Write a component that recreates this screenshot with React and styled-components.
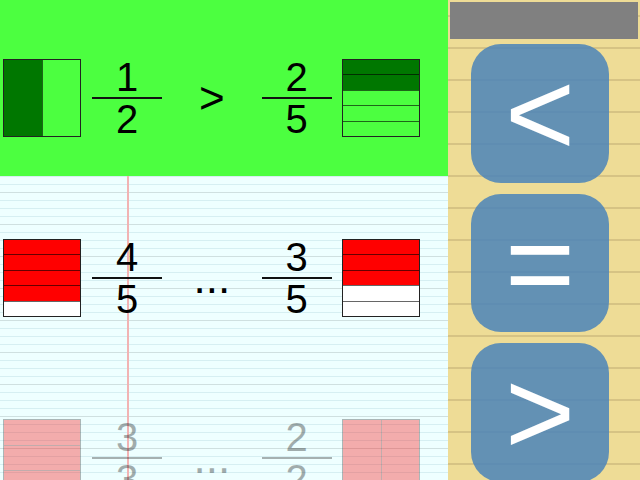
import styled, { createGlobalStyle } from "styled-components";

const GlobalStyle = createGlobalStyle`
  html, body {
    margin: 0;
    padding: 0;
    overflow: hidden;
  }
  body {
    font-family: "Liberation Sans", Arial, sans-serif;
  }
`;

const rows = [
  { left: [1, 2], op: ">", right: [2, 5], state: "done" },
  { left: [4, 5], op: "...", right: [3, 5], state: "current" },
  { left: [3, 3], op: "...", right: [2, 2], state: "next" },
];

const palette = {
  done: { fill: "#007700", empty: "#4cff40" },
  current: { fill: "#ff0000", empty: "#ffffff" },
  next: { fill: "#ff0000", empty: "#ffffff" },
};

function FractionBar({ num, den, state }) {
  const vertical = den === 2;
  const colors = palette[state];
  const parts = [];
  for (let i = 0; i < den; i++) {
    parts.push(
      <Part
        key={i}
        $vertical={vertical}
        $first={i === 0}
        $color={i < num ? colors.fill : colors.empty}
      />
    );
  }
  return <Bar $vertical={vertical}>{parts}</Bar>;
}

function Fraction({ num, den }) {
  return (
    <FractionBox>
      <Digit>{num}</Digit>
      <Rule />
      <Digit>{den}</Digit>
    </FractionBox>
  );
}

export default function App() {
  return (
    <>
      <GlobalStyle />
      <Screen>
        <Paper>
          {rows.map((row, i) => (
            <Row key={i} $state={row.state}>
              <Cell>
                <FractionBar num={row.left[0]} den={row.left[1]} state={row.state} />
              </Cell>
              <Cell>
                <Fraction num={row.left[0]} den={row.left[1]} />
              </Cell>
              <Cell>
                <Operator>{row.op}</Operator>
              </Cell>
              <Cell>
                <Fraction num={row.right[0]} den={row.right[1]} />
              </Cell>
              <Cell>
                <FractionBar num={row.right[0]} den={row.right[1]} state={row.state} />
              </Cell>
            </Row>
          ))}
        </Paper>
        <Sidebar>
          <ScoreBar />
          <AnswerButton>&lt;</AnswerButton>
          <AnswerButton>=</AnswerButton>
          <AnswerButton>&gt;</AnswerButton>
        </Sidebar>
      </Screen>
    </>
  );
}

const Screen = styled.div`
  display: flex;
  width: 640px;
  height: 480px;
  overflow: hidden;
`;

const Paper = styled.div`
  width: 448px;
  height: 480px;
  flex-shrink: 0;
  background-color: #eeffff;
  background-image: linear-gradient(
      to right,
      transparent 127px,
      #f2b3b3 127px,
      #f2b3b3 129px,
      transparent 129px
    ),
    repeating-linear-gradient(
      to bottom,
      #cfe0e0 0px,
      #cfe0e0 1px,
      transparent 1px,
      transparent 32px
    ),
    repeating-linear-gradient(
      to bottom,
      #d6eff2 0px,
      #d6eff2 1px,
      transparent 1px,
      transparent 8px
    );
`;

const Row = styled.div`
  display: grid;
  grid-template-columns: repeat(5, 84.75px);
  align-items: center;
  box-sizing: border-box;
  height: 176px;
  margin-bottom: 4px;
  padding-top: 20px;
  background: ${(p) => (p.$state === "done" ? "#4cff40" : "transparent")};
  opacity: ${(p) => (p.$state === "next" ? 0.32 : 1)};
`;

const Cell = styled.div`
  display: flex;
  justify-content: center;
  align-items: center;
`;

const Bar = styled.div`
  display: flex;
  flex-direction: ${(p) => (p.$vertical ? "row" : "column")};
  width: 78px;
  height: 78px;
  box-sizing: border-box;
  border: 1px solid #222;
`;

const Part = styled.div`
  flex: 1;
  background: ${(p) => p.$color};
  ${(p) =>
    p.$first
      ? ""
      : p.$vertical
      ? "border-left: 1px solid rgba(0, 0, 0, 0.6);"
      : "border-top: 1px solid rgba(0, 0, 0, 0.6);"}
`;

const FractionBox = styled.div`
  display: flex;
  flex-direction: column;
  align-items: center;
`;

const Digit = styled.div`
  font-size: 40px;
  line-height: 40px;
  height: 40px;
  color: #000;
`;

const Rule = styled.div`
  width: 70px;
  height: 2px;
  background: #111;
`;

const Operator = styled.div`
  font-size: 44px;
  line-height: 44px;
  color: #000;
`;

const Sidebar = styled.div`
  width: 192px;
  height: 480px;
  flex-shrink: 0;
  box-sizing: border-box;
  padding: 2px 2px 0 2px;
  display: flex;
  flex-direction: column;
  background-color: #eedc96;
  background-image: repeating-linear-gradient(
    to bottom,
    transparent 0px,
    transparent 15px,
    #d6c384 15px,
    #d6c384 17px,
    transparent 17px,
    transparent 32px
  );
`;

const ScoreBar = styled.div`
  height: 37px;
  margin-bottom: 5px;
  background: #808080;
  flex-shrink: 0;
`;

const AnswerButton = styled.div`
  flex-shrink: 0;
  width: 138px;
  height: 138.5px;
  margin-left: 21px;
  & + & {
    margin-top: 11px;
  }
  border-radius: 30px;
  background: rgba(74, 132, 186, 0.85);
  color: #fff;
  font-size: 120px;
  line-height: 1;
  display: flex;
  align-items: center;
  justify-content: center;
`;
